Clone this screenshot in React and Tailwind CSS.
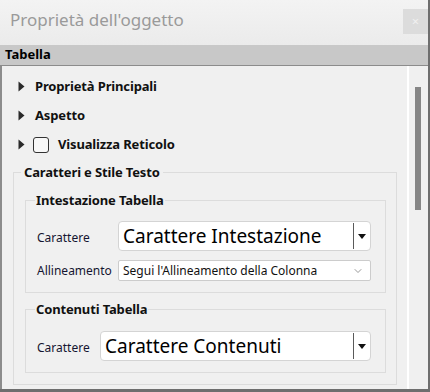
import { ChevronDown } from "lucide-react";

const font = { fontFamily: '"Noto Sans", "Open Sans", sans-serif' };

function Caret() {
  return (
    <svg width="7" height="11" viewBox="0 0 7 11" className="shrink-0">
      <path d="M0.5 0.5 L6.5 5.5 L0.5 10.5 Z" fill="#2a2a2a" />
    </svg>
  );
}

function TreeRow({ children, check }) {
  return (
    <div className="flex h-[29px] items-center pl-[16px]">
      <Caret />
      {check && <div className="ml-[8px] h-[16px] w-[16px] rounded-[3px] border border-[#333] bg-[#f8f8f8]" />}
      <span className={`${check ? "ml-[9px]" : "ml-[10px]"} text-[13px] font-bold tracking-[-0.15px] text-[#111]`}>{children}</span>
    </div>
  );
}

function FontCombo({ text, width }) {
  return (
    <div className={`flex h-[30px] items-center rounded-[4px] border border-[#d4d4d4] bg-white ${width}`}>
      <span className="flex-1 pl-[4px] text-[19px] leading-none text-black">{text}</span>
      <div className="h-[26px] w-px bg-[#5a5a5a]" />
      <svg width="8" height="5" viewBox="0 0 8 5" className="mx-[4px]">
        <path d="M0 0 H8 L4 5 Z" fill="#111" />
      </svg>
    </div>
  );
}

export default function App() {
  return (
    <div className="h-[392px] w-[430px] bg-[#6e6e6e]" style={font}>
      <div className="flex h-[389px] w-[428px] flex-col rounded-tr-[6px] bg-[#f2f2f2]">
        <div className="flex h-[45px] items-start justify-between bg-gradient-to-b from-[#f3f3f3] to-[#ebebeb] pl-[10px]">
          <span className="mt-[7px] text-[17px] text-[#9a9a9a]">Proprietà dell'oggetto</span>
          <div className="mt-[9px] flex h-[25px] w-[25px] items-center justify-center bg-[#dcdcdc] text-[13px] text-[#f0f0f0]">
            ×
          </div>
        </div>

        <div className="flex h-[20px] items-center bg-[#c8c8c8] pl-[5px] text-[13px] font-bold text-black">Tabella</div>

        <div className="flex flex-1 border-l-2 border-t border-[#8c8c8c] bg-[#f0f0f0]">
          <div className="flex-1 pt-[6px]">
            <TreeRow>Proprietà Principali</TreeRow>
            <TreeRow>Aspetto</TreeRow>
            <TreeRow check>Visualizza Reticolo</TreeRow>

            <fieldset className="ml-[11px] mr-[10px] mt-[4px] border border-[#dcdcdc] pb-[11px]">
              <legend className="ml-[7px] px-[3px] text-[13px] font-bold leading-[18px] tracking-[-0.15px] text-[#111]">
                Caratteri e Stile Testo
              </legend>

              <fieldset className="ml-[11px] mr-[10px] mt-[10px] border border-[#dcdcdc] pb-[11px] pl-[11px] pr-[12px]">
                <legend className="-ml-[2px] px-[1px] text-[13px] font-bold leading-[18px] tracking-[-0.15px] text-[#111]">
                  Intestazione Tabella
                </legend>
                <div className="mt-[12px] flex items-center">
                  <span className="mt-[3px] w-[81px] text-[12px] text-[#151530]">Carattere</span>
                  <FontCombo text="Carattere Intestazione" width="w-[253px]" />
                </div>
                <div className="mt-[9px] flex items-center">
                  <span className="w-[81px] text-[12px] text-[#151530]">Allineamento</span>
                  <div className="flex h-[21px] w-[253px] items-center justify-between rounded-[2px] border border-[#cccccc] bg-white pl-[4px] pr-[6px]">
                    <span className="text-[12px] text-[#111]">Segui l'Allineamento della Colonna</span>
                    <ChevronDown size={12} strokeWidth={1.5} className="text-[#777]" />
                  </div>
                </div>
              </fieldset>

              <fieldset className="ml-[11px] mr-[10px] mt-[7px] border border-[#dcdcdc] pb-[11px] pl-[11px] pr-[13px]">
                <legend className="-ml-[2px] px-[1px] text-[13px] font-bold leading-[18px] tracking-[-0.15px] text-[#111]">
                  Contenuti Tabella
                </legend>
                <div className="mt-[13px] flex items-center">
                  <span className="mt-[3px] w-[63px] text-[12px] text-[#151530]">Carattere</span>
                  <FontCombo text="Carattere Contenuti" width="w-[271px]" />
                </div>
              </fieldset>
            </fieldset>
          </div>

          <div className="w-[21px] border-l-2 border-white pl-[6px] pt-[21px]">
            <div className="h-[123px] w-[6px] bg-[#868686]" />
          </div>
        </div>
      </div>
    </div>
  );
}
